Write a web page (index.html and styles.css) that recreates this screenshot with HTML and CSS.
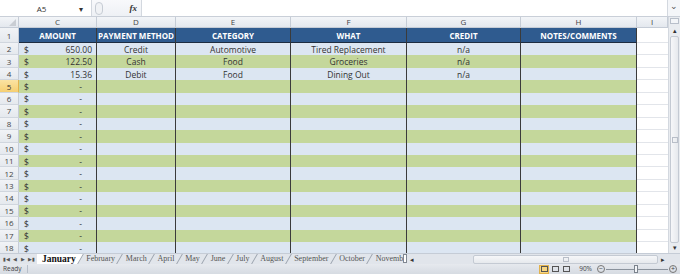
FILE: index.html
```html
<!DOCTYPE html>
<html lang="en">
<head>
    <meta charset="UTF-8">
    <title>Budget - January</title>
    <link rel="stylesheet" href="styles.css">
</head>
<body>

    <div class="formula-bar">
        <div class="name-box">
            <span class="name-text">A5</span>
            <span class="name-arrow">&#9662;</span>
        </div>
        <div class="fx-area">
            <span class="grip"></span>
            <span class="fx"><i>f</i>x</span>
        </div>
        <div class="formula-input"></div>
        <div class="formula-arrow">&#8964;</div>
    </div>

    <div class="sheet">
        <div class="grid" id="grid">
            <div class="row col-heads">
                <div class="corner"><span class="corner-tri"></span></div>
                <div class="col-head">C</div>
                <div class="col-head">D</div>
                <div class="col-head">E</div>
                <div class="col-head">F</div>
                <div class="col-head">G</div>
                <div class="col-head">H</div>
                <div class="col-head">I</div>
            </div>
            <div class="row head-row">
                <div class="row-num">1</div>
                <div class="cell th">AMOUNT</div>
                <div class="cell th">PAYMENT METHOD</div>
                <div class="cell th">CATEGORY</div>
                <div class="cell th">WHAT</div>
                <div class="cell th">CREDIT</div>
                <div class="cell th">NOTES/COMMENTS</div>
                <div class="cell blank"></div>
            </div>
        </div>
        <div class="vscroll">
            <div class="split-v"></div>
            <div class="scroll-btn">&#9652;</div>
            <div class="vtrack">
                <div class="vthumb"><span class="vgrip"></span></div>
            </div>
            <div class="scroll-btn">&#9662;</div>
        </div>
    </div>

    <div class="tab-bar">
        <div class="tab-nav">
            <span>&#9646;&#9664;</span>
            <span>&#9664;</span>
            <span>&#9654;</span>
            <span>&#9654;&#9646;</span>
        </div>
        <div class="tabs">
            <span class="tab active">January</span>
            <span class="tab">February</span>
            <span class="tab">March</span>
            <span class="tab">April</span>
            <span class="tab">May</span>
            <span class="tab">June</span>
            <span class="tab">July</span>
            <span class="tab">August</span>
            <span class="tab">September</span>
            <span class="tab">October</span>
            <span class="tab">Novemb</span>
        </div>
        <div class="split-h"></div>
        <div class="hscroll">
            <span class="hbtn">&#9666;</span>
            <div class="htrack">
                <div class="hthumb"><span class="hgrip"></span></div>
            </div>
            <span class="hbtn">&#9656;</span>
        </div>
    </div>

    <div class="status-bar">
        <span class="ready">Ready</span>
        <div class="status-right">
            <span class="view-icon selected"><span class="vi-grid"></span></span>
            <span class="view-icon"><span class="vi-page"></span></span>
            <span class="view-icon"><span class="vi-break"></span></span>
            <span class="zoom-pct">90%</span>
            <span class="zoom-btn">&minus;</span>
            <span class="zoom-line"><span class="zoom-thumb"></span></span>
            <span class="zoom-btn">+</span>
        </div>
    </div>

    <script>
        const entries = [
            { amount: "650.00", method: "Credit", category: "Automotive", what: "Tired Replacement", credit: "n/a" },
            { amount: "122.50", method: "Cash", category: "Food", what: "Groceries", credit: "n/a" },
            { amount: "15.36", method: "Debit", category: "Food", what: "Dining Out", credit: "n/a" }
        ];

        function renderRows() {
            const grid = document.getElementById("grid");
            for (let r = 2; r <= 18; r++) {
                const e = entries[r - 2] || { amount: "-", method: "", category: "", what: "", credit: "" };
                const row = document.createElement("div");
                row.classList.add("row", "data-row", r % 2 === 0 ? "blue" : "green");
                row.innerHTML = `
                    <div class="row-num ${r === 5 ? 'sel' : ''}">${r}</div>
                    <div class="cell amount"><span class="cur">$</span><span class="val ${e.amount === '-' ? 'dash' : ''}">${e.amount}</span></div>
                    <div class="cell">${e.method}</div>
                    <div class="cell">${e.category}</div>
                    <div class="cell">${e.what}</div>
                    <div class="cell">${e.credit}</div>
                    <div class="cell"></div>
                    <div class="cell blank"></div>
                `;
                grid.appendChild(row);
            }
        }

        renderRows();
    </script>

</body>
</html>
```

FILE: styles.css
```css
body {
    margin: 0;
    padding: 0;
    width: 680px;
    height: 274px;
    overflow: hidden;
    background: #fff;
    font-family: "Open Sans", "Liberation Sans", sans-serif;
    color: #333;
}
.formula-bar {
    display: flex;
    height: 17px;
    background: #f4f6f9;
    border-bottom: 1px solid #c9cfd8;
    box-sizing: border-box;
}
.name-box {
    width: 91px;
    display: flex;
    align-items: center;
    background: #fff;
    border-right: 1px solid #d3d8df;
    font-size: 8px;
}
.name-text {
    flex: 1;
    text-align: center;
    padding-left: 4px;
}
.name-arrow {
    font-size: 8px;
    width: 12px;
    color: #333;
}
.fx-area {
    width: 49px;
    display: flex;
    align-items: center;
    justify-content: space-between;
    padding: 0 4px 0 3px;
    box-sizing: border-box;
    background: linear-gradient(#f8f9fb, #eef1f5);
}
.grip {
    width: 6px;
    height: 11px;
    border: 1px solid #c6ccd4;
    border-radius: 4px;
    background: #f0f2f5;
}
.fx {
    font-family: "Liberation Serif", serif;
    font-size: 9px;
    font-style: italic;
    font-weight: bold;
    color: #333;
}
.formula-input {
    flex: 1;
    background: #fff;
    border-left: 1px solid #d3d8df;
    border-right: 1px solid #d3d8df;
}
.formula-arrow {
    width: 12px;
    font-size: 9px;
    text-align: center;
    line-height: 12px;
    color: #555;
}
.sheet {
    display: flex;
    height: 236px;
}
.grid {
    width: 668px;
    overflow: hidden;
}
.row {
    display: grid;
    grid-template-columns: 19px 78px 79px 115px 116px 114px 116px 31px;
    box-sizing: border-box;
}
.col-heads {
    height: 11px;
    background: linear-gradient(#f3f5f8, #e4e8ee);
    border-bottom: 1px solid #c5ccd6;
}
.corner {
    position: relative;
    border-right: 1px solid #c5ccd6;
}
.corner-tri {
    position: absolute;
    right: 2px;
    bottom: 1px;
    width: 0;
    height: 0;
    border-left: 7px solid transparent;
    border-bottom: 7px solid #c9cdd3;
}
.col-head {
    font-size: 8px;
    line-height: 10px;
    text-align: center;
    color: #444;
    border-right: 1px solid #c5ccd6;
}
.head-row {
    height: 15px;
}
.row-num {
    font-size: 8px;
    text-align: center;
    color: #444;
    background: linear-gradient(#f1f3f6, #e5e9ee);
    border-right: 1px solid #c5ccd6;
    border-bottom: 1px solid #d0d6de;
    box-sizing: border-box;
    display: flex;
    align-items: center;
    justify-content: center;
}
.row-num.sel {
    background: linear-gradient(#fbe3a3, #f6cf72);
    color: #333;
    border-right: 1px solid #e2b24c;
}
.cell {
    font-size: 8.5px;
    text-align: center;
    white-space: nowrap;
    overflow: hidden;
    border-right: 1px solid #3b3b3b;
    box-sizing: border-box;
    display: flex;
    align-items: center;
    justify-content: center;
    color: #333;
}
.th {
    background: #2f5b8f;
    color: #fff;
    font-weight: bold;
    font-size: 8px;
    border-bottom: 1px solid #1d2c40;
}
.cell.blank {
    background: #fff;
    border-right: none;
    border-bottom: 1px solid #e2e5ea;
}
.data-row {
    height: 12.45px;
}
.blue .cell {
    background: #dce6f2;
}
.green .cell {
    background: #c4d79b;
}
.blue .cell.blank, .green .cell.blank {
    background: #fff;
}
.amount {
    justify-content: space-between;
    padding: 0 4px 0 5px;
}
.val.dash {
    padding-right: 10px;
}
.vscroll {
    width: 12px;
    display: flex;
    flex-direction: column;
    background: #e9ecf0;
    border-left: 1px solid #d3d8df;
    box-sizing: border-box;
}
.split-v {
    height: 4px;
    margin: 1px 1px 2px;
    border: 1px solid #b8bfca;
    background: #f3f5f8;
}
.scroll-btn {
    height: 10px;
    font-size: 7px;
    text-align: center;
    line-height: 10px;
    color: #333;
}
.vtrack {
    flex: 1;
    padding: 0 1px;
}
.vthumb {
    height: 100%;
    background: linear-gradient(90deg, #f6f7f9, #e6e9ed);
    border: 1px solid #c4cad3;
    border-radius: 2px;
    box-sizing: border-box;
    display: flex;
    align-items: center;
    justify-content: center;
}
.vgrip {
    width: 4px;
    height: 4px;
    border: 1px solid #b8bec8;
}
.tab-bar {
    display: flex;
    align-items: stretch;
    height: 11px;
    background: #e1e5eb;
    border-top: 1px solid #c5ccd6;
    box-sizing: border-box;
}
.tab-nav {
    width: 37px;
    display: flex;
    align-items: center;
    justify-content: space-around;
    font-size: 5px;
    color: #555;
    padding-left: 1px;
    box-sizing: border-box;
}
.tabs {
    display: flex;
    width: 366px;
    overflow: hidden;
}
.tab {
    position: relative;
    font-family: "Liberation Serif", serif;
    font-size: 8px;
    line-height: 10px;
    padding: 0 5.4px;
    color: #555;
    white-space: nowrap;
}
.tab::after {
    content: "";
    position: absolute;
    right: 0;
    top: 0;
    width: 1px;
    height: 10px;
    background: #9aa2ad;
    transform: skewX(-30deg);
}
.tab.active {
    color: #111;
    font-size: 9.5px;
    font-weight: bold;
    padding: 0 5px 0 5px;
    z-index: 1;
}
.tab.active::before {
    content: "";
    position: absolute;
    left: -3px;
    right: 0;
    top: 0;
    bottom: 0;
    background: #fff;
    transform: skewX(-30deg);
    z-index: -1;
}
.tab:last-child::after {
    display: none;
}
.split-h {
    width: 4px;
    height: 9px;
    margin-top: 0;
    border: 1px solid #808791;
    background: #fff;
    box-sizing: border-box;
}
.hscroll {
    flex: 1;
    display: flex;
    align-items: center;
    padding-right: 12px;
}
.hbtn {
    width: 10px;
    font-size: 7px;
    text-align: center;
    color: #333;
}
.htrack {
    flex: 1;
    height: 9px;
    padding-left: 56px;
}
.hthumb {
    height: 100%;
    background: linear-gradient(#f6f7f9, #e6e9ed);
    border: 1px solid #c4cad3;
    border-radius: 2px;
    box-sizing: border-box;
    display: flex;
    align-items: center;
    justify-content: center;
}
.hgrip {
    width: 4px;
    height: 3px;
    border: 1px solid #b8bec8;
}
.status-bar {
    display: flex;
    align-items: center;
    height: 10px;
    background: linear-gradient(#e6e9ee, #d6dbe2);
    font-size: 6.5px;
    line-height: 8px;
    color: #444;
}
.ready {
    padding: 0 5px 0 3px;
    border-right: 1px solid #b8bfca;
}
.status-right {
    margin-left: auto;
    display: flex;
    align-items: center;
    gap: 1px;
    padding-right: 3px;
}
.view-icon {
    width: 10px;
    height: 9px;
    display: flex;
    align-items: center;
    justify-content: center;
}
.view-icon.selected {
    background: #f8d680;
    border: 1px solid #e2b24c;
    box-sizing: border-box;
}
.vi-grid, .vi-page, .vi-break {
    width: 7px;
    height: 6px;
    border: 1px solid #555;
    box-sizing: border-box;
}
.zoom-pct {
    margin: 0 4px 0 7px;
}
.zoom-btn {
    width: 8px;
    height: 8px;
    border: 1px solid #777;
    border-radius: 50%;
    box-sizing: border-box;
    font-size: 7px;
    line-height: 6px;
    text-align: center;
}
.zoom-line {
    position: relative;
    width: 62px;
    height: 1px;
    background: #8a929c;
}
.zoom-thumb {
    position: absolute;
    left: 28px;
    top: -4px;
    width: 4px;
    height: 8px;
    background: #f3f5f8;
    border: 1px solid #7b838d;
    box-sizing: border-box;
}
```
